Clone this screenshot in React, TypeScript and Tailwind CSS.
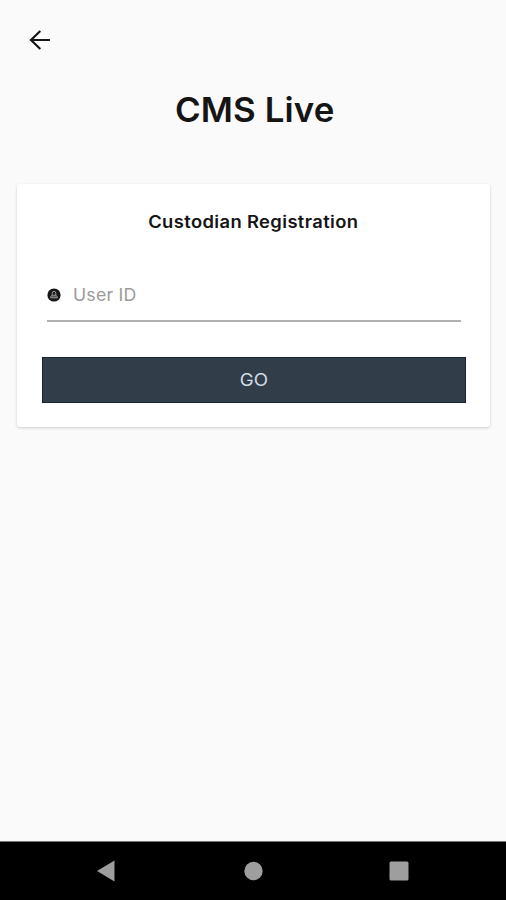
import React from "react";

function BackArrow() {
  return (
    <svg width="22" height="22" viewBox="0 0 22 22" fill="none" stroke="#151515" strokeWidth="2.2">
      <path d="M21 11H2.5M11.3 2L2 11l9.3 9" />
    </svg>
  );
}

function UserBadge() {
  return (
    <svg width="14" height="14" viewBox="0 0 14 14" className="shrink-0">
      <circle cx="7" cy="7" r="6.6" fill="#171717" />
      <path d="M5.2 7V5.2a1.8 1.8 0 0 1 3.6 0V7" fill="none" stroke="#aaa" strokeWidth="0.9" />
      <path d="M3.7 9.9V8.5L5 7.2h4l1.3 1.3v1.4z" fill="#555" stroke="#aaa" strokeWidth="0.8" />
    </svg>
  );
}

export default function App() {
  return (
    <div className="flex h-[900px] w-[506px] flex-col overflow-hidden bg-[#fafafa] font-['Inter',sans-serif] text-[#151515]">
      <header className="h-[88px] pt-[29px] pl-[29px]">
        <button aria-label="Back" className="block"><BackArrow /></button>
      </header>
      <h1 className="h-[96px] pl-[3px] text-center text-[34px] leading-[43px] font-semibold whitespace-nowrap">
        <span className="inline-block scale-x-[1.025] tracking-[0.1px]">CMS Live</span>
      </h1>
      <main className="mr-[16px] ml-[17px] h-[243px] rounded-[3px] bg-white px-[25px] shadow-[0_1px_3px_rgba(0,0,0,0.18)]">
        <h2 className="h-[97px] pt-[26px] text-center text-[17px] leading-[24px] font-semibold whitespace-nowrap">
          <span className="inline-block scale-x-[1.08] tracking-[0.35px]">Custodian Registration</span>
        </h2>
        <label className="mr-[4px] ml-[5px] flex h-[41px] items-start border-b-2 border-[#b0b0b0] pt-[7px]">
          <UserBadge />
          <span className="ml-[12px] -mt-[5px] inline-block origin-left scale-x-[1.04] text-[17px] leading-[24px] tracking-[0.2px] text-[#9b9b9b]">User ID</span>
        </label>
        <button className="mt-[35px] flex h-[46px] w-[424px] items-center justify-center border border-[#172434] bg-[#323d4a] pt-[2px] text-[17px] text-[#d1dce5]">
          <span className="inline-block scale-x-[1.1]">GO</span>
        </button>
      </main>
      <nav className="mt-auto flex h-[59px] items-center border-t border-[#777] bg-black">
        <svg width="506" height="58" viewBox="0 0 506 58" fill="#9e9e9e">
          <path d="M97 29L114.5 18.5V39.5z" />
          <circle cx="253.5" cy="29" r="9.2" />
          <rect x="389.5" y="19.5" width="19" height="19" rx="1.5" />
        </svg>
      </nav>
    </div>
  );
}
